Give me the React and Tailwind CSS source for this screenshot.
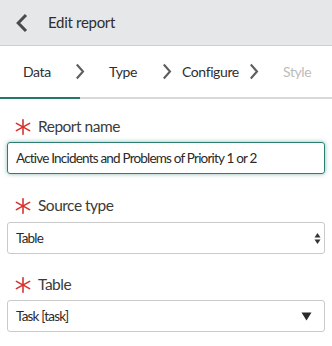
function Asterisk() {
  return (
    <svg width="16" height="16" viewBox="0 0 16 16" className="shrink-0">
      <g stroke="#d6312d" strokeWidth="1.6" strokeLinecap="round">
        <line x1="8" y1="0.8" x2="8" y2="15.2" />
        <line x1="1.4" y1="4.4" x2="14.6" y2="11.6" />
        <line x1="1.4" y1="11.6" x2="14.6" y2="4.4" />
      </g>
    </svg>
  );
}

function Label({ children }) {
  return (
    <div className="flex items-center gap-[7px] pl-[15px] h-[24px]">
      <Asterisk />
      <span className="text-[15.5px] tracking-[-0.5px] text-[#3b3b3b]">{children}</span>
    </div>
  );
}

function StepChevron({ className }) {
  return (
    <svg width="10" height="17" viewBox="0 0 10 17" className={`shrink-0 ${className}`}>
      <path d="M1.8 1.5 L8 8.5 L1.8 15.5" fill="none" stroke="#5e5e5e" strokeWidth="2.1" />
    </svg>
  );
}

export default function App() {
  return (
    <div className="w-[332px] h-[346px] bg-white overflow-hidden" style={{ fontFamily: 'Lato, "Open Sans", sans-serif' }}>
      <div className="h-[46px] bg-[#e6e7e9] border-b border-[#cdced0] flex items-center">
        <svg width="14" height="20" viewBox="0 0 14 20" className="ml-[15px]">
          <path d="M11 2 L3.2 10 L11 18" fill="none" stroke="#4a4a4a" strokeWidth="3" />
        </svg>
        <span className="ml-[19px] text-[15px] tracking-[-0.3px] text-[#2e2e2e]">Edit report</span>
      </div>

      <div className="relative h-[53px] border-b-2 border-[#d9d9d9] flex items-center text-[14px] tracking-[-0.4px] text-[#2e2e2e] whitespace-nowrap">
        <span className="ml-[23px] w-[52px]">Data</span>
        <StepChevron />
        <span className="ml-[24px] w-[28px]">Type</span>
        <StepChevron className="ml-[25px]" />
        <span className="ml-[10px] w-[57px]">Configure</span>
        <StepChevron className="ml-[10px]" />
        <span className="ml-[24px] text-[#bcbcbc]">Style</span>
        <div className="absolute left-0 bottom-[-2px] w-[80px] h-[2px] bg-[#1f7a6c]" />
      </div>

      <div className="pt-[16px] text-[13.5px] tracking-[-0.8px] text-[#2a2a2a]">
        <Label>Report name</Label>
        <div className="mx-[7px] mt-[3px] h-[32px] rounded-[3px] border border-[#2a7f72] shadow-[0_0_4px_rgba(42,127,114,0.55)] flex items-center px-[8px]">
          Active Incidents and Problems of Priority 1 or 2
        </div>

        <div className="mt-[20px]">
          <Label>Source type</Label>
        </div>
        <div className="mx-[7px] mt-[4px] h-[32px] rounded-[3px] border border-[#cacaca] flex items-center justify-between pl-[8px] pr-[3px]">
          <span>Table</span>
          <svg width="7" height="13" viewBox="0 0 7 13">
            <path d="M3.5 1 L6.5 5.5 H0.5 Z" fill="#333" />
            <path d="M3.5 12 L6.5 7.5 H0.5 Z" fill="#333" />
          </svg>
        </div>

        <div className="mt-[19px]">
          <Label>Table</Label>
        </div>
        <div className="mx-[7px] mt-[3px] h-[32px] rounded-[3px] border border-[#cacaca] flex items-center justify-between pl-[8px] pr-[12px]">
          <span>Task [task]</span>
          <svg width="11" height="9" viewBox="0 0 11 9">
            <path d="M0.5 0.5 H10.5 L5.5 8.5 Z" fill="#2a2a2a" />
          </svg>
        </div>
      </div>
    </div>
  );
}
